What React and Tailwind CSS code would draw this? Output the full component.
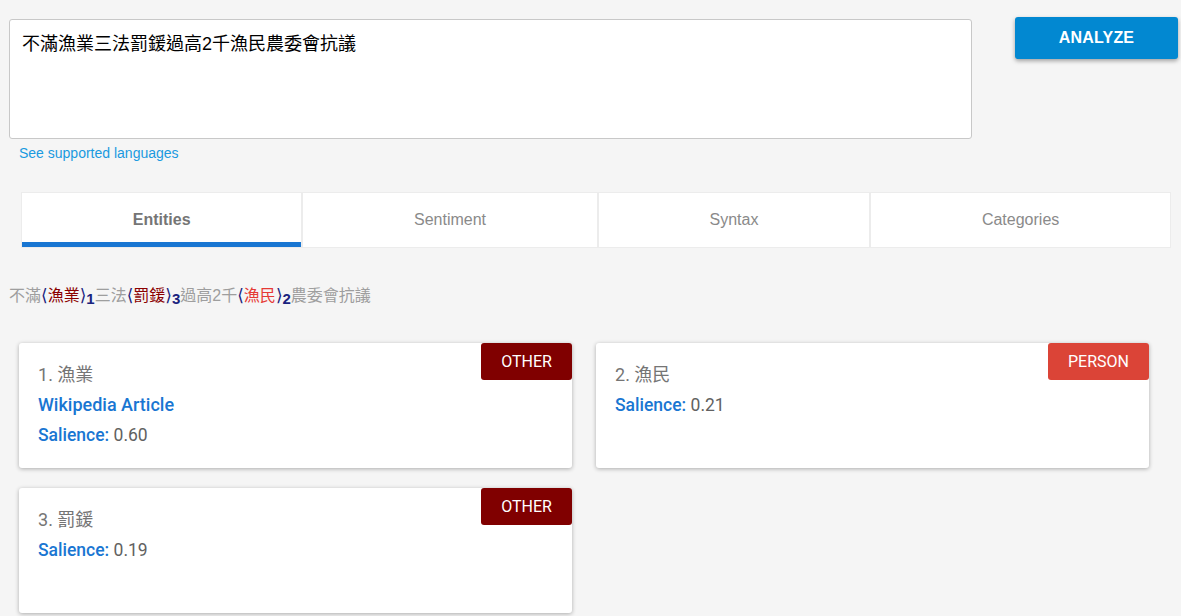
import { useState } from 'react';

const TEXT = '不滿漁業三法罰鍰過高2千漁民農委會抗議';

const tabs = ['Entities', 'Sentiment', 'Syntax', 'Categories'];

const entities = [
  { id: 1, name: '漁業', type: 'OTHER', wiki: true, salience: '0.60' },
  { id: 2, name: '漁民', type: 'PERSON', wiki: false, salience: '0.21' },
  { id: 3, name: '罰鍰', type: 'OTHER', wiki: false, salience: '0.19' },
];

// pieces of the annotated sentence
const pieces = [
  { t: '不滿' },
  { t: '漁業', n: 1, type: 'OTHER' },
  { t: '三法' },
  { t: '罰鍰', n: 3, type: 'OTHER' },
  { t: '過高2千' },
  { t: '漁民', n: 2, type: 'PERSON' },
  { t: '農委會抗議' },
];

const cjk = "font-['Liberation_Sans','Noto_Sans_CJK_TC',sans-serif]";
const roboto = "font-['Roboto','Noto_Sans_CJK_TC',sans-serif]";

function Badge({ type }) {
  const color = type === 'PERSON' ? 'bg-[#db4437] w-[101px]' : 'bg-[#800000] w-[91px]';
  return (
    <div
      className={`absolute top-0 right-0 h-[37px] rounded-[3px] ${color} flex items-center justify-center text-white text-[16px] ${roboto}`}
    >
      {type}
    </div>
  );
}

function EntityCard({ e }) {
  return (
    <div className={`relative bg-white rounded-[3px] shadow-[0_1px_4px_rgba(0,0,0,0.3)] h-[125px] pl-[19px] pt-[21px] ${roboto}`}>
      <Badge type={e.type} />
      <div className="text-[18px] text-[#757575] leading-[22px]">
        {e.id}. {e.name}
      </div>
      {e.wiki && (
        <div className="mt-[8px] text-[18px] font-medium text-[#1976d2] leading-[22px]">Wikipedia Article</div>
      )}
      <div className="mt-[8px] text-[17.5px] leading-[22px] text-[#616161]">
        <span className="font-medium text-[#1976d2]">Salience:</span> {e.salience}
      </div>
    </div>
  );
}

export default function App() {
  const [active, setActive] = useState(0);

  return (
    <div className={`min-h-[616px] bg-[#f5f5f5] ${cjk}`}>
      <div className="flex items-start pt-[17px]">
        <div className="ml-[9px] w-[963px]">
          <div className="mt-[2px] h-[120px] bg-white border border-[#c8c8c8] rounded-[3px] px-[12px] pt-[11px] text-[18px] text-black leading-[26px]">
            {TEXT}
          </div>
          <a className="block ml-[10px] mt-[4px] text-[14px] text-[#1a9ae0]">See supported languages</a>
        </div>
        <button className="ml-[43px] w-[163px] h-[42px] rounded-[3px] bg-[#0288d1] text-white font-bold text-[16px] tracking-[0.2px] shadow-[0_2px_4px_rgba(0,0,0,0.35)]">
          ANALYZE
        </button>
      </div>

      <div className="mt-[28px] ml-[21px] w-[1150px] flex gap-[2px] bg-[#ececec] p-px">
        {tabs.map((t, i) => (
          <div
            key={t}
            onClick={() => setActive(i)}
            className={`flex-auto h-[54px] bg-white flex items-center justify-center text-[16px] relative cursor-pointer ${
              i === active ? 'font-bold text-[#757575]' : 'text-[#8a8a8a]'
            }`}
          >
            {t}
            {i === active && <div className="absolute left-0 right-0 bottom-0 h-[5px] bg-[#1976d2]" />}
          </div>
        ))}
      </div>

      <div className="mt-[36px] ml-[9px] text-[16px] text-[#9e9e9e] leading-[22px]">
        {pieces.map((p, i) =>
          p.n ? (
            <span key={i}>
              <span className="text-[#1a237e] font-['DejaVu_Sans',sans-serif] text-[17px]">⟨</span>
              <span className={p.type === 'PERSON' ? 'text-[#e53935]' : 'text-[#8b0000]'}>{p.t}</span>
              <span className="text-[#1a237e] font-['DejaVu_Sans',sans-serif] text-[17px]">⟩</span>
              <span className="inline-block text-[#1a237e] font-bold text-[15px] translate-y-[3px]">{p.n}</span>
            </span>
          ) : (
            <span key={i}>{p.t}</span>
          )
        )}
      </div>

      <div className="mt-[36px] ml-[19px] w-[1130px] grid grid-cols-2 gap-x-[24px] gap-y-[20px]">
        {entities.map((e) => (
          <EntityCard key={e.id} e={e} />
        ))}
      </div>
    </div>
  );
}
